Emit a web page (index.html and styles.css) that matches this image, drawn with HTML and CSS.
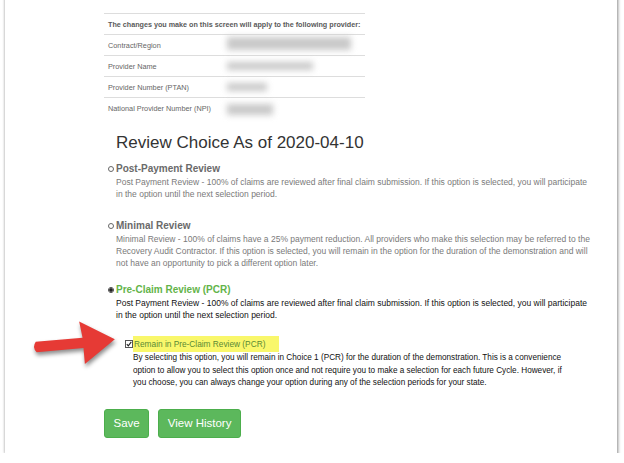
FILE: index.html
```html
<!DOCTYPE html>
<html lang="en">
<head>
    <meta charset="UTF-8">
    <meta name="viewport" content="width=device-width, initial-scale=1.0">
    <title>Review Choice</title>
    <link rel="stylesheet" href="styles.css">
</head>
<body>

    <div class="frame">
        <div class="content">

            <div class="provider">
                <div class="provider-row provider-head">The changes you make on this screen will apply to the following provider:</div>
                <div class="provider-row">
                    <span class="provider-label">Contract/Region</span>
                    <span class="hidden-value value-region"></span>
                </div>
                <div class="provider-row">
                    <span class="provider-label">Provider Name</span>
                    <span class="hidden-value value-name"></span>
                </div>
                <div class="provider-row">
                    <span class="provider-label">Provider Number (PTAN)</span>
                    <span class="hidden-value value-ptan"></span>
                </div>
                <div class="provider-row">
                    <span class="provider-label">National Provider Number (NPI)</span>
                    <span class="hidden-value value-npi"></span>
                </div>
            </div>

            <h3>Review Choice As of 2020-04-10</h3>

            <div class="option">
                <label class="option-title"><input type="radio" name="review"> Post-Payment Review</label>
                <p class="option-desc">Post Payment Review - 100% of claims are reviewed after final claim submission. If this option is selected, you will participate in the option until the next selection period.</p>
            </div>

            <div class="option option-long">
                <label class="option-title"><input type="radio" name="review"> Minimal Review</label>
                <p class="option-desc">Minimal Review - 100% of claims have a 25% payment reduction. All providers who make this selection may be referred to the Recovery Audit Contractor. If this option is selected, you will remain in the option for the duration of the demonstration and will not have an opportunity to pick a different option later.</p>
            </div>

            <div class="option selected">
                <label class="option-title"><input type="radio" name="review" checked> Pre-Claim Review (PCR)</label>
                <p class="option-desc">Post Payment Review - 100% of claims are reviewed after final claim submission. If this option is selected, you will participate in the option until the next selection period.</p>

                <div class="remain">
                    <label class="remain-title">
                        <svg class="checkbox" width="8" height="8" viewBox="0 0 8 8">
                            <rect x="0.5" y="0.5" width="7" height="7" fill="#fff" stroke="#555"/>
                            <path d="M1.8 4.2 L3.3 5.8 L6.3 1.8" fill="none" stroke="#222" stroke-width="1.1"/>
                        </svg><span class="highlight">Remain in Pre-Claim Review (PCR)</span>
                    </label>
                    <p class="remain-desc">By selecting this option, you will remain in Choice 1 (PCR) for the duration of the demonstration. This is a convenience option to allow you to select this option once and not require you to make a selection for each future Cycle. However, if you choose, you can always change your option during any of the selection periods for your state.</p>
                </div>
            </div>

            <div class="actions">
                <button class="btn">Save</button>
                <button class="btn">View History</button>
            </div>
        </div>

        <!-- annotation arrow pointing at the checkbox -->
        <svg class="arrow" width="96" height="56" viewBox="0 0 96 56">
            <g transform="rotate(-5 45 28)">
                <path d="M8 23.5 L55 23.5 L53 7 L87 28 L55 50 L55 34 L8 34 Q3.5 28.7 8 23.5 Z" fill="#e63a35"/>
            </g>
        </svg>
    </div>

</body>
</html>
```

FILE: styles.css
```css
body {
    margin: 0;
    background-color: #fff;
    font-family: "Liberation Sans", Arial, sans-serif;
    overflow: hidden;
}
.frame {
    position: relative;
    margin: -10px 7px 0 5px;
    height: 463px;
    background-color: #fff;
    box-shadow: 1px 3px 3px rgba(0, 0, 0, 0.45), -1px 0 2px rgba(0, 0, 0, 0.12);
}
.content {
    padding: 23px 0 0 99px;
}

/* provider summary */
.provider {
    width: 261px;
}
.provider-row {
    display: flex;
    align-items: center;
    height: 21px;
    border-top: 1px solid #ddd;
    box-sizing: border-box;
    padding-left: 4px;
    font-size: 7.3px;
    color: #666;
    white-space: nowrap;
}
.provider-head {
    font-weight: bold;
    font-size: 7.2px;
    color: #5a5a5a;
}
.provider-label {
    width: 119px;
    flex-shrink: 0;
}
.hidden-value {
    display: inline-block;
    height: 9px;
    background-color: #c9c9c9;
    filter: blur(3px);
}
.value-region { width: 124px; height: 13px; margin-top: -4px; }
.value-name { width: 86px; height: 8px; }
.value-ptan { width: 40px; height: 8px; }
.value-npi { width: 46px; height: 11px; margin-top: 3px; }

h3 {
    margin: 15px 0 9px 12px;
    font-size: 17px;
    line-height: 20px;
    font-weight: normal;
    color: #333;
}

/* review options */
.option {
    margin-left: 4px;
    margin-bottom: 19px;
}
.option-long {
    margin-bottom: 14px;
}
.option-title {
    display: flex;
    align-items: center;
    font-size: 10px;
    line-height: 14px;
    font-weight: bold;
    color: #6a6a6a;
}
.option-title input {
    appearance: none;
    width: 6px;
    height: 6px;
    margin: 0 2px 0 0;
    border: 1px solid #666;
    border-radius: 50%;
    background-color: #fff;
    box-sizing: border-box;
}
.option-title input:checked {
    background: radial-gradient(circle, #222 0 1.5px, #fff 1.9px);
    border-color: #444;
}
.option-desc {
    margin: 0 0 0 8px;
    width: 474px;
    font-size: 8.5px;
    line-height: 12px;
    color: #7a7a7a;
}
.selected .option-title {
    color: #63b44a;
}
.selected .option-desc {
    color: #111;
}

.remain {
    margin: 15px 0 0 17px;
}
.remain-title {
    display: flex;
    align-items: center;
    font-size: 8.3px;
    line-height: 14px;
}
.checkbox {
    display: block;
}
.highlight {
    padding: 1px 14px 1px 1px;
    background-color: #f9f76b;
    color: #5a8a35;
}
.remain-desc {
    margin: 0 0 0 8px;
    width: 430px;
    font-size: 8.2px;
    line-height: 12.5px;
    color: #111;
}

/* buttons */
.actions {
    display: flex;
    gap: 9px;
    margin-top: 9px;
}
.btn {
    padding: 7px 8.5px;
    font-family: "Liberation Sans", Arial, sans-serif;
    font-size: 11.5px;
    line-height: 13px;
    color: #fff;
    background-color: #5cb85c;
    border: 1px solid #4cae4c;
    border-radius: 3px;
}

/* annotation */
.arrow {
    position: absolute;
    left: 23px;
    top: 325px;
    filter: drop-shadow(1px 3px 2px rgba(0, 0, 0, 0.45));
}
```
